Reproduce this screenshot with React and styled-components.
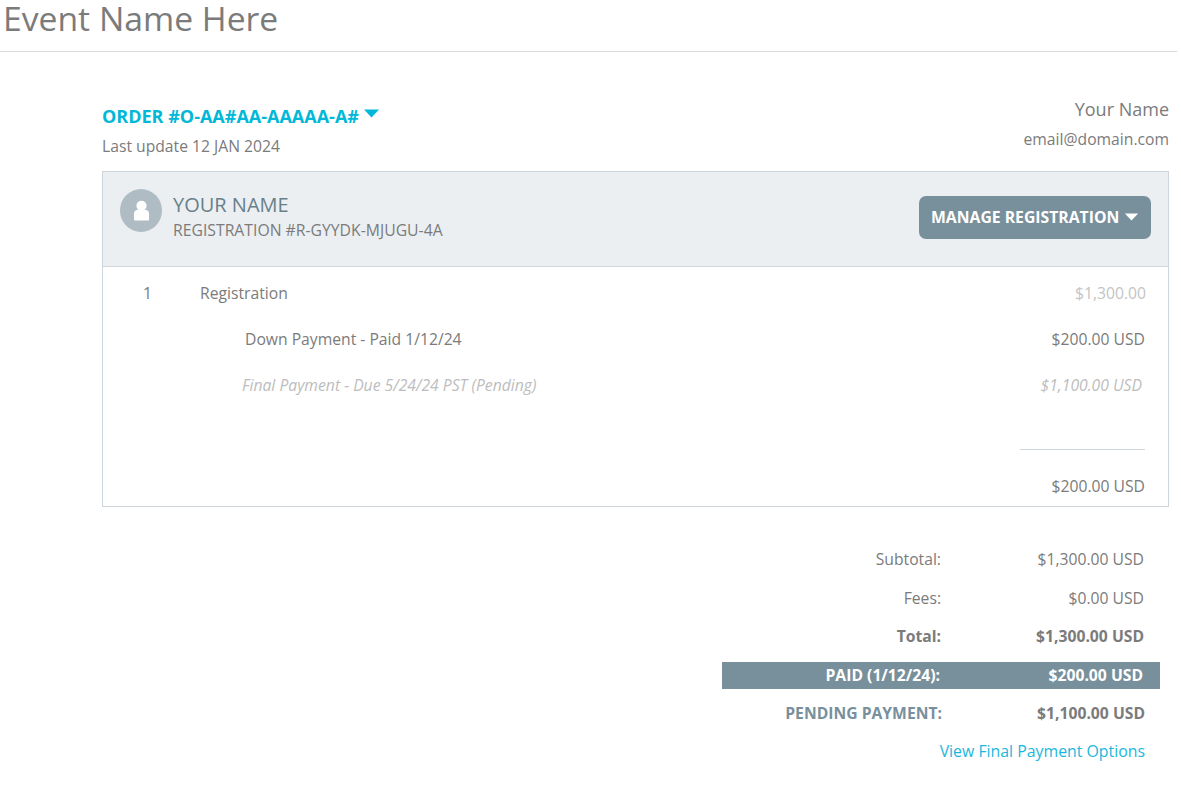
import React from "react";
import styled, { createGlobalStyle } from "styled-components";

const Global = createGlobalStyle`
  html, body { margin: 0; padding: 0; background: #fff; }
  body { font-family: "Open Sans", "Liberation Sans", sans-serif; color: #7b7b7b; font-size: 15.7px; overflow: hidden; }
  * { box-sizing: border-box; }
`;

const Page = styled.div`
  width: 1181px;
  height: 785px;
  overflow: hidden;
`;
const Header = styled.header`
  height: 52px;
  width: 1177px;
  border-bottom: 1px solid #d8dadb;
  padding-left: 3px;
`;
const Title = styled.h1`
  margin: 0;
  font-size: 33.7px;
  font-weight: 400;
  line-height: 37px;
  color: #7b7b7b;
`;
const Main = styled.main`
  margin: 0 12px 0 102px;
  width: 1067px;
`;
const OrderBar = styled.div`
  display: flex;
  justify-content: space-between;
  height: 119px;
  padding-top: 44px;
`;
const OrderInfo = styled.div`
  display: flex;
  flex-direction: column;
`;
const OrderLink = styled.div`
  display: flex;
  align-items: flex-start;
  gap: 4px;
  height: 31px;
  padding-top: 8px;
  font-size: 18px;
  line-height: 24px;
  font-weight: 700;
  color: #00b8d8;

  svg {
    margin-top: 5px;
  }
`;
const Updated = styled.div`
  line-height: 24px;
  margin-top: 7px;
  color: #7b7b7b;
`;
const Contact = styled.div`
  text-align: right;
`;
const ContactName = styled.div`
  font-size: 18px;
  line-height: 26px;
`;
const ContactMail = styled.div`
  line-height: 24px;
  margin-top: 5px;
`;
const Panel = styled.section`
  height: 336px;
  border: 1px solid #ced6db;
`;
const PanelHead = styled.div`
  display: flex;
  align-items: center;
  justify-content: space-between;
  height: 95px;
  padding: 0 17px 3px 17px;
  background: #ebeff2;
  border-bottom: 1px solid #ced6db;
`;
const Person = styled.div`
  display: flex;
  align-items: flex-start;
  align-self: flex-start;
  gap: 11px;
  margin-top: 17px;
`;
const Avatar = styled.div`
  width: 42px;
  height: 43px;
  border-radius: 50%;
  background: #afbcc3;
  display: flex;
  align-items: center;
  justify-content: center;
`;
const PersonText = styled.div`
  margin-top: 2px;
`;
const PersonName = styled.div`
  font-size: 20px;
  line-height: 28px;
  color: #688089;
`;
const RegNumber = styled.div`
  font-size: 15.75px;
  line-height: 24px;
  margin-top: -1px;
  color: #7b7b7b;
`;
const ManageButton = styled.button`
  display: flex;
  align-items: center;
  gap: 5px;
  width: 232px;
  height: 43px;
  padding: 0 0 2px 12px;
  border: 0;
  border-radius: 7px;
  background: #78909c;
  color: #fff;
  font-family: inherit;
  font-size: 15.75px;
  font-weight: 700;
  white-space: nowrap;
`;
const Lines = styled.div`
  display: flex;
  flex-direction: column;
  padding-top: 3px;
`;
const Line = styled.div`
  display: flex;
  align-items: center;
  height: 46px;
  font-style: ${p => (p.$muted ? "italic" : "normal")};
  color: ${p => (p.$muted ? "#bdbdbd" : "#7b7b7b")};
`;
const Qty = styled.span`
  width: 97px;
  padding-left: 40px;
`;
const Description = styled.span`
  flex: 1;
  padding-left: ${p => p.$indent || 0}px;
`;
const Amount = styled.span`
  padding-right: ${p => p.$right || 23}px;
  color: ${p => p.$color || "inherit"};
`;
const Rule = styled.div`
  width: 125px;
  height: 1px;
  margin: 41px 0 0 917px;
  background: #ced6db;
`;
const TotalLine = styled(Line)`
  justify-content: flex-end;
  height: 36px;
  margin-top: 18px;
`;
const Summary = styled.section`
  display: flex;
  flex-direction: column;
  margin-top: 32px;
  margin-left: 620px;
  width: 438px;
`;
const SummaryRow = styled.div`
  display: grid;
  grid-template-columns: ${p => p.$labelWidth || 219}px 1fr;
  align-items: center;
  height: ${p => p.$h || 38}px;
  margin-bottom: ${p => p.$gap || 0}px;
  font-weight: ${p => (p.$bold ? 700 : 400)};
  color: ${p => p.$color || "#7b7b7b"};
  background: ${p => p.$bg || "transparent"};
`;
const PaidRow = styled(SummaryRow)`
  padding-bottom: 2px;
`;
const SummaryLabel = styled.span`
  text-align: right;
  color: ${p => p.$color || "inherit"};
`;
const SummaryValue = styled.span`
  text-align: right;
  padding-right: ${p => p.$right || 16}px;
`;
const PayLink = styled.a`
  display: block;
  text-align: right;
  padding-right: 15px;
  font-size: 15.85px;
  line-height: 28px;
  color: #1ab7dc;
`;

const Caret = ({ color, w = 16, h = 9 }) => (
  <svg width={w} height={h} viewBox="0 0 16 9" aria-hidden="true">
    <path d="M0.5 0.5h15L8 8.5z" fill={color} />
  </svg>
);

const PersonIcon = () => (
  <svg width="17" height="21" viewBox="0 0 18 22" aria-hidden="true">
    <circle cx="9" cy="6" r="5.4" fill="#fff" />
    <path d="M1 20.5v-6c0-2.6 2-4.2 4.5-4.2h7c2.5 0 4.5 1.6 4.5 4.2v6c0 .6-.4 1-1 1H2c-.6 0-1-.4-1-1z" fill="#fff" />
  </svg>
);

export default function App() {
  return (
    <Page>
      <Global />
      <Header>
        <Title>Event Name Here</Title>
      </Header>
      <Main>
        <OrderBar>
          <OrderInfo>
            <OrderLink>
              ORDER #O-AA#AA-AAAAA-A#
              <Caret color="#00b8d8" w={17} h={9} />
            </OrderLink>
            <Updated>Last update 12 JAN 2024</Updated>
          </OrderInfo>
          <Contact>
            <ContactName>Your Name</ContactName>
            <ContactMail>email@domain.com</ContactMail>
          </Contact>
        </OrderBar>
        <Panel>
          <PanelHead>
            <Person>
              <Avatar><PersonIcon /></Avatar>
              <PersonText>
                <PersonName>YOUR NAME</PersonName>
                <RegNumber>REGISTRATION #R-GYYDK-MJUGU-4A</RegNumber>
              </PersonText>
            </Person>
            <ManageButton>
              MANAGE REGISTRATION
              <Caret color="#fff" w={15} h={8} />
            </ManageButton>
          </PanelHead>
          <Lines>
            <Line>
              <Qty>1</Qty>
              <Description>Registration</Description>
              <Amount $color="#c4c4c4" $right={22}>$1,300.00</Amount>
            </Line>
            <Line>
              <Qty />
              <Description $indent={45}>Down Payment - Paid 1/12/24</Description>
              <Amount>$200.00 USD</Amount>
            </Line>
            <Line $muted>
              <Qty />
              <Description $indent={42}>Final Payment - Due 5/24/24 PST (Pending)</Description>
              <Amount $right={26}>$1,100.00 USD</Amount>
            </Line>
            <Rule />
            <TotalLine>
              <Amount>$200.00 USD</Amount>
            </TotalLine>
          </Lines>
        </Panel>
        <Summary>
          <SummaryRow $h={39}>
            <SummaryLabel>Subtotal:</SummaryLabel>
            <SummaryValue>$1,300.00 USD</SummaryValue>
          </SummaryRow>
          <SummaryRow $h={39}>
            <SummaryLabel>Fees:</SummaryLabel>
            <SummaryValue>$0.00 USD</SummaryValue>
          </SummaryRow>
          <SummaryRow $bold $gap={7}>
            <SummaryLabel>Total:</SummaryLabel>
            <SummaryValue>$1,300.00 USD</SummaryValue>
          </SummaryRow>
          <PaidRow $bold $h={27} $bg="#78909c" $color="#fff" $labelWidth={218}>
            <SummaryLabel>PAID (1/12/24):</SummaryLabel>
            <SummaryValue $right={17}>$200.00 USD</SummaryValue>
          </PaidRow>
          <SummaryRow $bold $h={48} $labelWidth={220}>
            <SummaryLabel $color="#78909c">PENDING PAYMENT:</SummaryLabel>
            <SummaryValue $right={15}>$1,100.00 USD</SummaryValue>
          </SummaryRow>
          <PayLink>View Final Payment Options</PayLink>
        </Summary>
      </Main>
    </Page>
  );
}
